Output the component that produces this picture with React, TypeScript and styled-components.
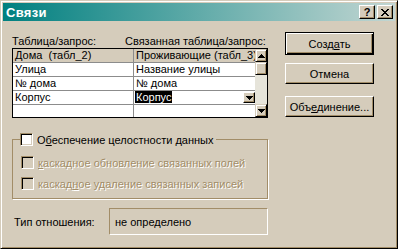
import styled, { createGlobalStyle } from 'styled-components'

const face = '#d5ccbb'
const shadow = '#a28d68'

const GlobalStyle = createGlobalStyle`
  html, body {
    margin: 0;
    padding: 0;
    background: ${face};
  }
  body {
    font-family: "Liberation Sans", Arial, sans-serif;
    font-size: 11px;
    color: #000;
  }
`

const Window = styled.div`
  width: 398px;
  height: 249px;
  box-sizing: border-box;
  background: ${face};
  border: 1px solid;
  border-color: ${face} #000 #000 ${face};
  box-shadow: inset 1px 1px #fff, inset -1px -1px ${shadow};
  padding: 2px;
  display: flex;
  flex-direction: column;
`

const TitleBar = styled.div`
  height: 18px;
  flex: none;
  display: flex;
  align-items: center;
  padding: 0 2px 0 3px;
  background: linear-gradient(to right, #008080, #c2d6d2);
`

const Title = styled.div`
  flex: 1;
  color: #fff;
  font-weight: bold;
  font-size: 13px;
  letter-spacing: 0.3px;
`

const CaptionButton = styled.div<{ $gap?: number }>`
  width: 16px;
  height: 14px;
  box-sizing: border-box;
  margin-left: ${p => p.$gap ?? 0}px;
  background: ${face};
  border: 1px solid;
  border-color: #fff #000 #000 #fff;
  box-shadow: inset -1px -1px ${shadow};
  display: flex;
  align-items: center;
  justify-content: center;
  font-weight: bold;
  font-size: 11px;
  line-height: 12px;
`

const Body = styled.div`
  display: flex;
  padding-left: 9px;
`

const LeftColumn = styled.div`
  width: 256px;
  display: flex;
  flex-direction: column;
`

const RightColumn = styled.div`
  width: 89px;
  margin-left: 17px;
  padding-top: 11px;
  display: flex;
  flex-direction: column;
`

const LabelRow = styled.div`
  display: flex;
  height: 13px;
  line-height: 13px;
  margin-top: 14px;
`

const Label = styled.div<{ $width?: number }>`
  width: ${p => (p.$width ? `${p.$width}px` : 'auto')};
  white-space: nowrap;
`

const Grid = styled.div`
  height: 70px;
  box-sizing: border-box;
  border: 1px solid #000;
  display: flex;
  background: #fff;
`

const Table = styled.div`
  display: grid;
  grid-template-columns: 121px 121px;
  grid-auto-rows: 14px;
  overflow: hidden;
`

const Cell = styled.div<{ $header?: boolean; $last?: boolean }>`
  position: relative;
  box-sizing: border-box;
  height: 14px;
  padding-left: 2px;
  line-height: 13px;
  white-space: nowrap;
  overflow: hidden;
  background: ${p => (p.$header ? face : '#fff')};
  border-bottom: 1px solid #8c8c8c;
  border-right: ${p => (p.$last ? 'none' : '1px solid #8c8c8c')};
`

const Selected = styled.span`
  background: #000;
  color: #fff;
  margin-left: -1px;
  padding: 0 1px;
`

const DropButton = styled.div`
  position: absolute;
  right: 0;
  top: 1px;
  width: 12px;
  height: 11px;
  box-sizing: border-box;
  background: ${face};
  border: 1px solid;
  border-color: #fff #000 #000 #fff;
  box-shadow: inset -1px -1px ${shadow};
  display: flex;
  align-items: center;
  justify-content: center;
`

const ScrollBar = styled.div`
  width: 12px;
  display: flex;
  flex-direction: column;
  background: #e6e4da;
`

const ScrollButton = styled.div<{ $size: number }>`
  width: 12px;
  height: ${p => p.$size}px;
  box-sizing: border-box;
  background: ${face};
  border: 1px solid;
  border-color: ${face} #000 #000 ${face};
  box-shadow: inset 1px 1px #fff, inset -1px -1px ${shadow};
  display: flex;
  align-items: center;
  justify-content: center;
`

const Track = styled.div`
  flex: 1;
`

const GroupBox = styled.fieldset`
  margin: 15px 0 0 0;
  padding: 0 0 0 8px;
  height: 66px;
  box-sizing: border-box;
  border: 1px solid ${shadow};
  box-shadow: 1px 1px 0 #fff;
  min-width: 0;
`

const Legend = styled.legend`
  padding: 0 3px 0 0;
  margin-left: -1px;
  height: 13px;
`

const CheckRow = styled.label<{ $disabled?: boolean }>`
  display: flex;
  align-items: center;
  height: 13px;
  color: ${p => (p.$disabled ? shadow : '#000')};
  text-shadow: ${p => (p.$disabled ? '1px 1px 0 #fff' : 'none')};
  white-space: nowrap;
  & + & {
    margin-top: 8px;
  }
`

const CheckBox = styled.span<{ $disabled?: boolean }>`
  width: 13px;
  height: 13px;
  box-sizing: border-box;
  flex: none;
  margin-right: 4px;
  border: 1px solid;
  border-color: ${shadow} #fff #fff ${shadow};
  box-shadow: inset 1px 1px #000, inset -1px -1px ${face};
  background: ${p => (p.$disabled ? face : '#fff')};
`

const CheckList = styled.div`
  display: flex;
  flex-direction: column;
  padding-top: 10px;
`

const RelationRow = styled.div`
  display: flex;
  align-items: center;
  margin-top: 9px;
`

const RelationLabel = styled.div`
  width: 95px;
  padding-left: 2px;
`

const StaticBox = styled.div`
  flex: 1;
  height: 27px;
  box-sizing: border-box;
  border: 1px solid;
  border-color: ${shadow} #fff #fff ${shadow};
  display: flex;
  align-items: center;
  padding-left: 5px;
`

const Button = styled.div<{ $default?: boolean; $gap: number }>`
  height: ${p => (p.$default ? 23 : 21)}px;
  margin-top: ${p => p.$gap}px;
  box-sizing: border-box;
  display: flex;
  align-items: center;
  justify-content: center;
  background: ${face};
  border: 1px solid ${p => (p.$default ? '#000' : '#fff')};
  border-right-color: #000;
  border-bottom-color: #000;
  box-shadow: ${p =>
    p.$default
      ? `inset 1px 1px #fff, inset -1px -1px #000, inset -2px -2px ${shadow}`
      : `inset -1px -1px ${shadow}`};
`

const Arrow = ({ up }: { up?: boolean }) => (
  <svg width="7" height="4" viewBox="0 0 7 4">
    <path d={up ? 'M3 0h1v1h1v1h1v1h1v1H0V3h1V2h1V1h1z' : 'M0 0h7v1H6v1H5v1H4v1H3V3H2V2H1V1H0z'} fill="#000" />
  </svg>
)

const CloseGlyph = () => (
  <svg width="8" height="7" viewBox="0 0 8 7">
    <path
      d="M0 0h2v1h1v1h2V1h1V0h2v1H7v1H6v1H5v1h1v1h1v1h1v1H6V6H5V5H3v1H2v1H0V6h1V5h1V4h1V3H2V2H1V1H0z"
      fill="#000"
    />
  </svg>
)

const rows: [string, string][] = [
  ['Улица', 'Название улицы'],
  ['№ дома', '№ дома'],
  ['Корпус', 'select'],
  ['', ''],
]

export default function App() {
  return (
    <>
      <GlobalStyle />
      <Window>
        <TitleBar>
          <Title>Связи</Title>
          <CaptionButton>?</CaptionButton>
          <CaptionButton $gap={2}>
            <CloseGlyph />
          </CaptionButton>
        </TitleBar>
        <Body>
          <LeftColumn>
            <LabelRow>
              <Label $width={113}>Таблица/запрос:</Label>
              <Label>Связанная таблица/запрос:</Label>
            </LabelRow>
            <Grid>
              <Table>
                <Cell $header>Дома&nbsp; (табл_2)</Cell>
                <Cell $header $last>
                  Проживающие (табл_3)
                </Cell>
                {rows.map(([left, right], i) => [
                  <Cell key={`l${i}`}>{left}</Cell>,
                  <Cell key={`r${i}`} $last>
                    {right === 'select' ? (
                      <>
                        <Selected>Корпус</Selected>
                        <DropButton>
                          <Arrow />
                        </DropButton>
                      </>
                    ) : (
                      right
                    )}
                  </Cell>,
                ])}
              </Table>
              <ScrollBar>
                <ScrollButton $size={13}>
                  <Arrow up />
                </ScrollButton>
                <ScrollButton $size={13} />
                <Track />
                <ScrollButton $size={13}>
                  <Arrow />
                </ScrollButton>
              </ScrollBar>
            </Grid>
            <GroupBox>
              <Legend>
                <CheckRow>
                  <CheckBox />
                  <span>
                    О<u>б</u>еспечение целостности данных
                  </span>
                </CheckRow>
              </Legend>
              <CheckList>
                <CheckRow $disabled>
                  <CheckBox $disabled />
                  <span>
                    <u>к</u>аскадное обновление связанных полей
                  </span>
                </CheckRow>
                <CheckRow $disabled>
                  <CheckBox $disabled />
                  <span>
                    каскад<u>н</u>ое удаление связанных записей
                  </span>
                </CheckRow>
              </CheckList>
            </GroupBox>
            <RelationRow>
              <RelationLabel>Тип отношения:</RelationLabel>
              <StaticBox>не определено</StaticBox>
            </RelationRow>
          </LeftColumn>
          <RightColumn>
            <Button $default $gap={0}>
              <span>
                Созд<u>а</u>ть
              </span>
            </Button>
            <Button $gap={8}>Отмена</Button>
            <Button $gap={12}>
              <span>
                Объ<u>е</u>динение...
              </span>
            </Button>
          </RightColumn>
        </Body>
      </Window>
    </>
  )
}
